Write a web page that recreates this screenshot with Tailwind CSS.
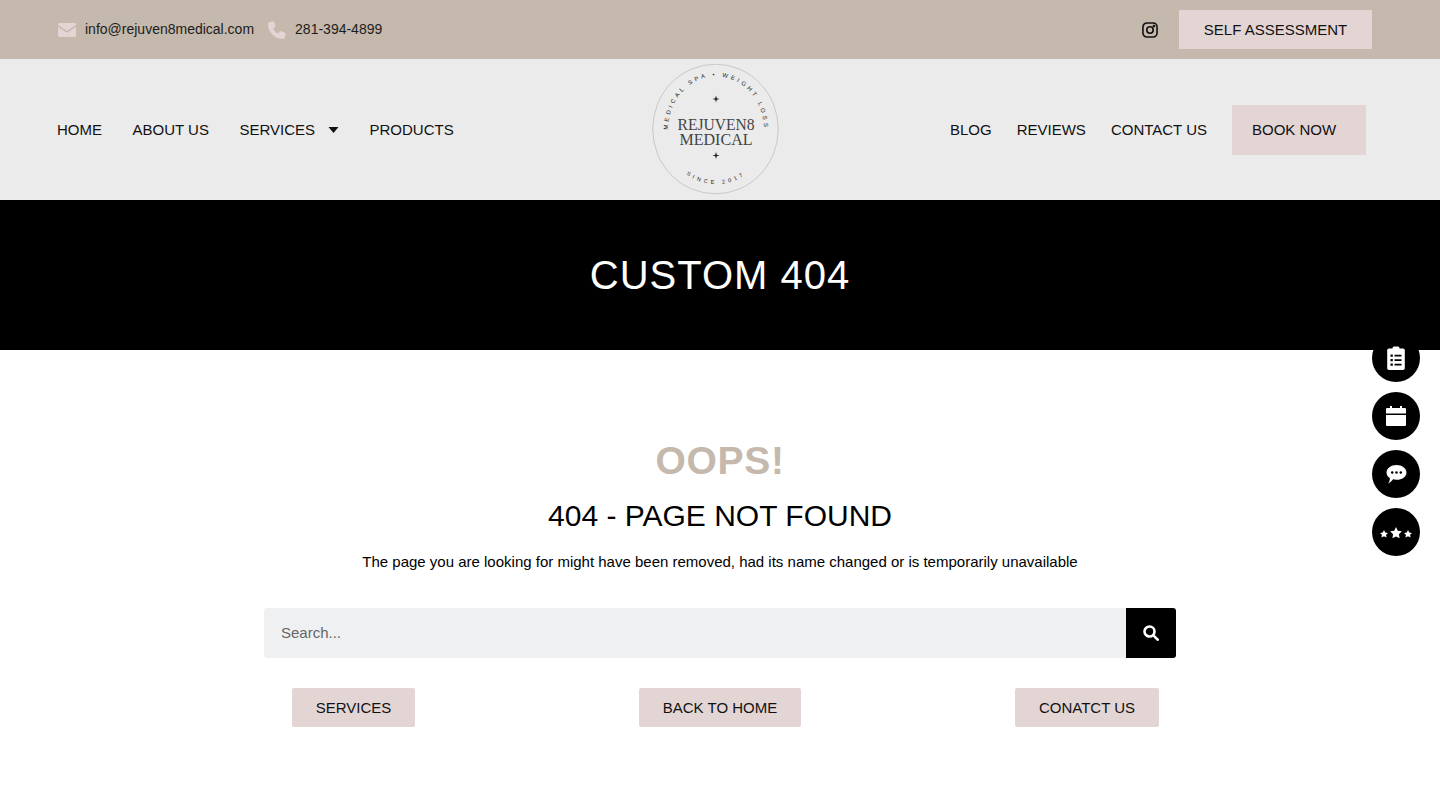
<!DOCTYPE html>
<html lang="en">
<head>
    <meta charset="UTF-8">
    <meta name="viewport" content="width=device-width, initial-scale=1.0">
    <title>Custom 404</title>
    <script src="https://cdn.jsdelivr.net/npm/@tailwindcss/browser@4"></script>
</head>
<body class="bg-white text-black font-['Liberation_Sans',Arial,sans-serif] h-[810px] overflow-hidden relative">

    <!-- top bar -->
    <div class="h-[59px] bg-[#c5b8ac] flex items-center pl-[58px] pr-[68px]">
        <svg class="w-[18px] h-[14px] mt-[1px]" viewBox="0 0 18 14" fill="#e3d5d4"><path d="M1.500 0h15A1.500 1.500 0 0 1 18 1.500v.6L9 8 0 2.100v-.6A1.500 1.500 0 0 1 1.500 0z"/><path d="M0 3.800 9 9.700l9-5.900v8.700a1.500 1.500 0 0 1-1.500 1.500h-15A1.500 1.500 0 0 1 0 12.500z"/></svg>
        <span class="ml-[9px] text-[14px] text-[#1c1c1c]">info@rejuven8medical.com</span>
        <svg class="ml-[14px] w-[18px] h-[18px] mt-[1px]" viewBox="0 0 18 18" fill="#e3d5d4"><path d="M4.600.4 1.300 1.300C.500 1.600 0 2.300 0 3.100 0 11.400 6.600 18 14.900 18c.8 0 1.500-.5 1.800-1.300l.9-3.300c.2-.7-.2-1.400-.8-1.700l-3.700-1.500c-.6-.2-1.300 0-1.700.5l-1.400 1.800C7.600 11.400 6.300 10 5.200 7.700L7 6.300c.5-.4.700-1.100.5-1.700L6 .9C5.700.4 5.200.2 4.600.4z"/></svg>
        <span class="ml-[9px] text-[14px] text-[#1c1c1c]">281-394-4899</span>
        <svg class="ml-auto w-[16px] h-[16px] mt-[1px]" viewBox="0 0 17 17" fill="none" stroke="#111" stroke-width="1.700"><rect x="1" y="1" width="15" height="15" rx="4.200"/><circle cx="8.500" cy="8.500" r="3.400"/><circle cx="12.700" cy="4.300" r=".6" fill="#111"/></svg>
        <a class="ml-[21px] w-[193px] h-[39px] pt-[1px] bg-[#e3d5d4] flex items-center justify-center text-[15px] text-[#111]">SELF ASSESSMENT</a>
    </div>

    <!-- nav -->
    <div class="h-[141px] bg-[#ebebeb] flex items-center pl-[57px] pr-[74px] relative">
        <nav class="flex items-center gap-[30.500px] text-[15px] text-[#111] mt-[1px]">
            <a>HOME</a>
            <a>ABOUT US</a>
            <a class="flex items-center">SERVICES
                <svg class="ml-[13px] w-[11px] h-[6px]" viewBox="0 0 11 6" fill="#111"><path d="M.5 0h10L5.500 6z"/></svg>
            </a>
            <a>PRODUCTS</a>
        </nav>
        <svg class="absolute left-[652px] top-[5px] w-[128px] h-[131px]" viewBox="0 0 128 131" fill="#222">
            <ellipse cx="63.500" cy="65" rx="62.800" ry="64.800" fill="none" stroke="#b0b0b0" stroke-width=".6"/>
            <defs>
                <path id="arcTop" d="M16 65.500a48 53 0 0 1 96 0"/>
                <path id="arcBottom" d="M19 91.800a50 50 0 0 0 90 0"/>
            </defs>
            <text font-family="Liberation Sans" font-size="6" letter-spacing="2.900" text-anchor="middle"><textPath href="#arcTop" startOffset="50%">MEDICAL SPA • WEIGHT LOSS</textPath></text>
            <text font-family="Liberation Sans" font-size="5.500" letter-spacing="3.300" text-anchor="middle"><textPath href="#arcBottom" startOffset="50%">SINCE 2017</textPath></text>
            <text x="64" y="66" text-anchor="middle" font-family="Liberation Serif" font-size="17" textLength="77" lengthAdjust="spacingAndGlyphs" fill="#444">REJUVEN8</text>
            <text x="64" y="81" text-anchor="middle" font-family="Liberation Serif" font-size="17" textLength="73" lengthAdjust="spacingAndGlyphs" fill="#444">MEDICAL</text>
            <path d="M64 31.500l.8 2.700 2.700.8-2.700.8-.8 2.700-.8-2.700-2.700-.8 2.700-.8zM64 88l.8 2.700 2.700.8-2.700.8-.8 2.700-.8-2.700-2.700-.8 2.700-.8z"/>
        </svg>
        <nav class="ml-auto flex items-center gap-[25px] text-[15px] text-[#111]">
            <a class="pt-[1px]">BLOG</a>
            <a class="pt-[1px]">REVIEWS</a>
            <a class="pt-[1px]">CONTACT US</a>
            <a class="w-[134px] h-[50px] pt-[1px] bg-[#e3d5d4] flex items-center pl-[20px]">BOOK NOW</a>
        </nav>
    </div>

    <!-- hero -->
    <div class="h-[150px] bg-black flex items-center justify-center relative z-10">
        <h1 class="text-[40px] leading-none tracking-[1px] text-white">CUSTOM 404</h1>
    </div>

    <!-- content -->
    <main class="w-[912px] mx-auto flex flex-col items-center">
        <h2 class="mt-[88px] text-[39px] leading-[46px] font-bold tracking-[.7px] text-[#c5b8ac]">OOPS!</h2>
        <h3 class="mt-[14px] text-[30px] leading-[36px]">404 - PAGE NOT FOUND</h3>
        <p class="mt-[19px] text-[15px] leading-[18px]">The page you are looking for might have been removed, had its name changed or is temporarily unavailable</p>
        <div class="mt-[37px] w-full h-[50px] flex">
            <div class="flex-1 bg-[#eff0f2] rounded-l-[3px] flex items-center pl-[17px] text-[15px] text-[#666]">Search...</div>
            <button class="w-[50px] bg-black rounded-r-[3px] flex items-center justify-center">
                <svg class="w-[16px] h-[16px]" viewBox="0 0 16 16" fill="none" stroke="#fff" stroke-width="2.600"><circle cx="6.500" cy="6.500" r="5"/><path d="m10.300 10.300 4.400 4.400" stroke-linecap="round"/></svg>
            </button>
        </div>
        <div class="mt-[30px] w-full relative h-[39px] text-[15px] text-[#111]">
            <a class="absolute left-[28px] w-[123px] h-[39px] pt-[1px] bg-[#e3d5d4] rounded-[2px] flex items-center justify-center">SERVICES</a>
            <a class="absolute left-[375px] w-[162px] h-[39px] pt-[1px] bg-[#e3d5d4] rounded-[2px] flex items-center justify-center">BACK TO HOME</a>
            <a class="absolute left-[751px] w-[144px] h-[39px] pt-[1px] bg-[#e3d5d4] rounded-[2px] flex items-center justify-center">CONATCT US</a>
        </div>
    </main>

    <!-- floating buttons -->
    <div class="absolute z-20 left-[1372px] top-[334px] flex flex-col gap-[10px]">
        <a class="w-[48px] h-[48px] rounded-full bg-black flex items-center justify-center">
            <svg class="w-[18px] h-[24px]" viewBox="0 0 18 24"><path fill="#fff" d="M2 2.500h3.500V2a1.500 1.500 0 0 1 1.500-1.500h4A1.500 1.500 0 0 1 12.500 2v.5H16A1.800 1.800 0 0 1 17.800 4.300v17.900A1.800 1.800 0 0 1 16 24H2a1.800 1.800 0 0 1-1.800-1.800V4.300A1.800 1.800 0 0 1 2 2.500z"/><path fill="#000" d="M3.500 8.500h2.300v2.300H3.500zM7.500 8.800h7v1.700h-7zM3.500 13h2.300v2.300H3.500zM7.500 13.300h7V15h-7zM3.500 17.500h2.300v2.300H3.500zM7.500 17.800h7v1.700h-7z"/></svg>
        </a>
        <a class="w-[48px] h-[48px] rounded-full bg-black flex items-center justify-center">
            <svg class="w-[20px] h-[20px] -mt-[1px]" viewBox="0 0 20 20" fill="#fff"><path d="M4 0h2v2h8V0h2v2h3a1 1 0 0 1 1 1v4.500H0V3a1 1 0 0 1 1-1h3zM0 9h20v10a1 1 0 0 1-1 1H1a1 1 0 0 1-1-1z"/></svg>
        </a>
        <a class="w-[48px] h-[48px] rounded-full bg-black flex items-center justify-center">
            <svg class="w-[21px] h-[19px]" viewBox="0 0 21 20"><path fill="#fff" d="M10.500 0C16.300 0 21 3.400 21 7.800s-4.700 7.800-10.500 7.800c-1.300 0-2.500-.2-3.600-.5C5.600 17 3.500 19 1.800 19.500c1.100-1.500 1.700-3.400 1.700-5.800C1.300 12.300 0 10.200 0 7.800 0 3.400 4.700 0 10.500 0z"/><g fill="#000"><circle cx="6" cy="8" r="1.300"/><circle cx="10.500" cy="8" r="1.300"/><circle cx="15" cy="8" r="1.300"/></g></svg>
        </a>
        <a class="w-[48px] h-[48px] rounded-full bg-black flex items-center justify-center">
            <svg class="w-[34px] h-[12px] mt-[2px]" viewBox="0 0 34 12" fill="#fff"><path d="m5 3 1.300 2.400 2.700.5-1.900 1.900.4 2.700L5 9.300l-2.500 1.200.4-2.700L1 5.900l2.700-.5zM29 3l1.300 2.400 2.700.5-1.900 1.900.4 2.700L29 9.300l-2.500 1.200.4-2.700L25 5.900l2.700-.5zM17 0l1.800 3.700 4.100.6-3 2.900.7 4.100-3.600-1.900-3.600 1.900.7-4.100-3-2.900 4.100-.6z"/></svg>
        </a>
    </div>

</body>
</html>
